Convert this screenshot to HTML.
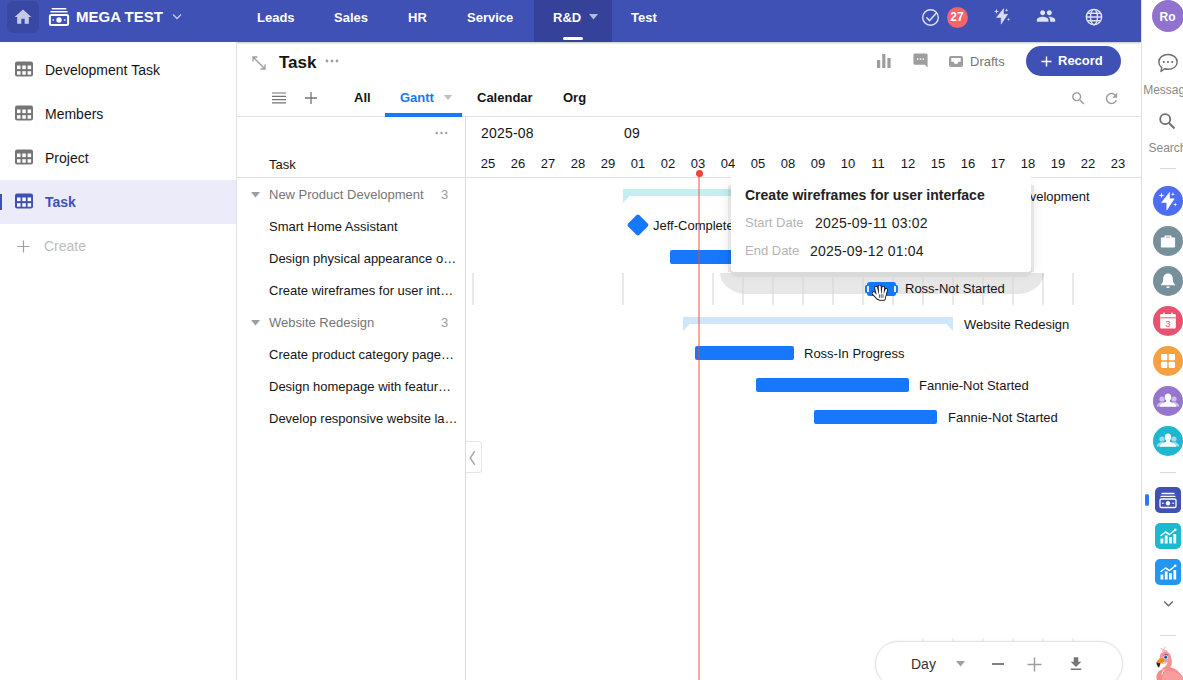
<!DOCTYPE html>
<html><head><meta charset="utf-8">
<style>
*{box-sizing:border-box;margin:0;padding:0}
html,body{width:1183px;height:680px;overflow:hidden;background:#fff;font-family:"Liberation Sans",sans-serif;color:#151515}
.abs{position:absolute}
#hdr{position:absolute;left:0;top:0;width:1141px;height:42px;background:#3f51b5;box-shadow:0 1px 2px rgba(0,0,0,.25)}
.nav{position:absolute;top:0;height:42px;line-height:35px;color:#fff;font-weight:bold;font-size:13px}
#side{position:absolute;left:0;top:42px;width:237px;height:638px;border-right:1px solid #e0e0e0;background:#fff}
.si{position:absolute;left:0;width:236px;height:44px;line-height:44px;font-size:14px;color:#151515;padding-left:45px}
.si svg{position:absolute;left:15px;top:13px}
#rail{position:absolute;left:1141px;top:0;width:42px;height:680px;background:#fff;border-left:1px solid #e0e0e0}
.t{position:absolute;white-space:nowrap}
.row{position:absolute;left:269px;font-size:13px;height:32px;line-height:32px;white-space:nowrap;color:#151515}
.day{position:absolute;top:156px;width:30px;text-align:center;font-size:13px;color:#151515;line-height:16px}
.bar{position:absolute;height:12px;background:#1677ff;border-radius:2px}
.bl{position:absolute;font-size:13px;line-height:16px;white-space:nowrap;color:#151515}
.circ{position:absolute;left:12px;width:30px;height:30px;border-radius:50%}
</style></head><body>
<div id="hdr">
<div class="abs" style="left:7px;top:1px;width:32px;height:32px;border-radius:6px;background:#3949a3"></div>
<svg class="abs" style="left:13px;top:7px" width="20" height="20" viewBox="0 0 24 24"><path fill="#c5cae9" d="M10 20v-6h4v6h5v-8h3L12 3 2 12h3v8z"/></svg>
<svg class="abs" style="left:48px;top:7px" width="22" height="20" viewBox="0 0 22 20"><g fill="none" stroke="#fff" stroke-linecap="round"><path d="M4.300 1.700h13.400M3 4.700h16" stroke-width="1.600"/><rect x="1.900" y="7.900" width="18.200" height="10.200" rx="1.300" stroke-width="2"/></g><circle cx="11" cy="13" r="2.700" fill="#fff"/><rect x="4.400" y="12.200" width="1.700" height="1.600" fill="#fff" opacity=".8"/><rect x="15.900" y="12.200" width="1.700" height="1.600" fill="#fff" opacity=".8"/></svg>
<div class="t" style="left:76px;top:8px;font-size:15px;line-height:18px;font-weight:bold;color:#fff">MEGA TEST</div>
<svg class="abs" style="left:172px;top:13px" width="10" height="8" viewBox="0 0 10 8"><path d="M1 1.500l4 4 4-4" fill="none" stroke="#c5cae9" stroke-width="1.300"/></svg>
<div class="abs" style="left:533.500px;top:0;width:78px;height:42px;background:#36429a"></div>
<div class="abs" style="left:563px;top:37px;width:20px;height:3px;border-radius:1.500px;background:#fff"></div>
<div class="nav" style="left:257px">Leads</div>
<div class="nav" style="left:334px">Sales</div>
<div class="nav" style="left:408px">HR</div>
<div class="nav" style="left:467px">Service</div>
<div class="nav" style="left:553px">R&amp;D</div>
<svg class="abs" style="left:589px;top:14px" width="9" height="6" viewBox="0 0 9 6"><path d="M0 0h9L4.500 5.500z" fill="#b3b9e0"/></svg>
<div class="nav" style="left:631px">Test</div>
<svg class="abs" style="left:921px;top:8px" width="19" height="19" viewBox="0 0 19 19"><circle cx="9.500" cy="9.500" r="7.800" fill="none" stroke="#dfe2f3" stroke-width="1.400"/><path d="M5.800 9.800l2.800 2.800 6.600-7.400" fill="none" stroke="#dfe2f3" stroke-width="1.500" stroke-linecap="round" stroke-linejoin="round"/></svg>
<div class="abs" style="left:946.500px;top:6.500px;width:21px;height:21px;border-radius:50%;background:#f3646c;color:#fff;font-size:12px;font-weight:bold;text-align:center;line-height:21px">27</div>
<svg class="abs" style="left:988.500px;top:3px" width="26.400" height="26.400" viewBox="0 0 30 30"><path fill="#dcdff2" stroke="#dcdff2" stroke-width=".6" stroke-linejoin="round" d="M16.6 6.400L8.600 16.400h5.200v7.600L21.200 12.800h-4.800z"/><path fill="#dcdff2" d="M8.50,6.60L9.16,8.84L11.40,9.50L9.16,10.16L8.50,12.40L7.84,10.16L5.60,9.50L7.84,8.84zM19.90,6.10L20.38,7.72L22.00,8.20L20.38,8.68L19.90,10.30L19.42,8.68L17.80,8.20L19.42,7.72zM22.20,16.50L22.68,18.12L24.30,18.60L22.68,19.08L22.20,20.70L21.72,19.08L20.10,18.60L21.72,18.12z"/></svg>
<svg class="abs" style="left:1036px;top:6px" width="20" height="20" viewBox="0 0 24 24"><path fill="#dfe2f3" d="M16 11c1.660 0 2.990-1.340 2.990-3S17.660 5 16 5c-1.660 0-3 1.340-3 3s1.340 3 3 3zm-8 0c1.660 0 2.990-1.340 2.990-3S9.660 5 8 5C6.340 5 5 6.340 5 8s1.340 3 3 3zm0 2c-2.330 0-7 1.170-7 3.500V19h14v-2.500c0-2.330-4.670-3.500-7-3.500zm8 0c-.29 0-.62.020-.97.050 1.160.84 1.970 1.970 1.970 3.450V19h6v-2.500c0-2.330-4.670-3.500-7-3.500z"/></svg>
<svg class="abs" style="left:1084px;top:7px" width="20" height="20" viewBox="0 0 24 24"><g fill="none" stroke="#dfe2f3" stroke-width="1.700"><circle cx="12" cy="12" r="9.200"/><ellipse cx="12" cy="12" rx="4.200" ry="9.200"/><path d="M3 12h18M4.500 7.500h15M4.500 16.500h15"/></g></svg>
</div>
<div id="side">
<div class="si" style="top:6px"><svg width="18" height="16" viewBox="0 0 18 16"><rect x="0" y="0.500" width="18" height="15" rx="2" fill="#757575"/><g fill="#fff"><rect x="2" y="4.500" width="3.500" height="3.600"/><rect x="7.300" y="4.500" width="3.500" height="3.600"/><rect x="12.600" y="4.500" width="3.500" height="3.600"/><rect x="2" y="10.200" width="3.500" height="3.500"/><rect x="7.300" y="10.200" width="3.500" height="3.500"/><rect x="12.600" y="10.200" width="3.500" height="3.500"/></g></svg>Development Task</div>
<div class="si" style="top:50px"><svg width="18" height="16" viewBox="0 0 18 16"><rect x="0" y="0.500" width="18" height="15" rx="2" fill="#757575"/><g fill="#fff"><rect x="2" y="4.500" width="3.500" height="3.600"/><rect x="7.300" y="4.500" width="3.500" height="3.600"/><rect x="12.600" y="4.500" width="3.500" height="3.600"/><rect x="2" y="10.200" width="3.500" height="3.500"/><rect x="7.300" y="10.200" width="3.500" height="3.500"/><rect x="12.600" y="10.200" width="3.500" height="3.500"/></g></svg>Members</div>
<div class="si" style="top:94px"><svg width="18" height="16" viewBox="0 0 18 16"><rect x="0" y="0.500" width="18" height="15" rx="2" fill="#757575"/><g fill="#fff"><rect x="2" y="4.500" width="3.500" height="3.600"/><rect x="7.300" y="4.500" width="3.500" height="3.600"/><rect x="12.600" y="4.500" width="3.500" height="3.600"/><rect x="2" y="10.200" width="3.500" height="3.500"/><rect x="7.300" y="10.200" width="3.500" height="3.500"/><rect x="12.600" y="10.200" width="3.500" height="3.500"/></g></svg>Project</div>
<div class="si" style="top:138px;background:#ebebfa;color:#3f51b5;font-weight:bold"><svg width="18" height="16" viewBox="0 0 18 16"><rect x="0" y="0.500" width="18" height="15" rx="2" fill="#3f51b5"/><g fill="#fff"><rect x="2" y="4.500" width="3.500" height="3.600"/><rect x="7.300" y="4.500" width="3.500" height="3.600"/><rect x="12.600" y="4.500" width="3.500" height="3.600"/><rect x="2" y="10.200" width="3.500" height="3.500"/><rect x="7.300" y="10.200" width="3.500" height="3.500"/><rect x="12.600" y="10.200" width="3.500" height="3.500"/></g></svg>Task</div>
<div class="abs" style="left:0;top:152px;width:2px;height:16px;background:#3f51b5"></div>
<div class="si" style="top:182px;color:#bdbdbd;padding-left:44px"><svg style="left:17px;top:16px" width="13" height="13" viewBox="0 0 13 13"><path d="M6.500 0.500v12M0.500 6.500h12" stroke="#9e9e9e" stroke-width="1.200"/></svg>Create</div>
</div>
<div id="main">
<svg class="abs" style="left:251px;top:55px" width="16" height="16" viewBox="0 0 16 16"><g fill="none" stroke="#9e9e9e" stroke-width="1.300"><path d="M2 2l12 12M2 6.500V2h4.500M14 9.500V14H9.500"/></g></svg>
<div class="t" style="left:279px;top:52px;font-size:17px;line-height:22px;font-weight:bold;color:#151515">Task</div>
<svg class="abs" style="left:325px;top:59px" width="14" height="4" viewBox="0 0 14 4"><g fill="#9e9e9e"><circle cx="2" cy="2" r="1.400"/><circle cx="7" cy="2" r="1.400"/><circle cx="12" cy="2" r="1.400"/></g></svg>
<svg class="abs" style="left:876px;top:53px" width="16" height="16" viewBox="0 0 16 16"><g fill="#9e9e9e"><rect x="1" y="7" width="3.200" height="8"/><rect x="6.200" y="1" width="3.200" height="14"/><rect x="11.400" y="5" width="3.200" height="10"/></g></svg>
<svg class="abs" style="left:912px;top:52px" width="17" height="17" viewBox="0 0 24 24"><path fill="#9e9e9e" d="M20 2H4c-1.100 0-1.990.9-1.990 2L2 22l4-4h14c1.100 0 2-.9 2-2V4c0-1.100-.9-2-2-2z" transform="translate(24,0) scale(-1,1)"/><g fill="#fff"><rect x="7" y="9" width="2" height="2"/><rect x="11" y="9" width="2" height="2"/><rect x="15" y="9" width="2" height="2"/></g></svg>
<svg class="abs" style="left:949px;top:55.500px" width="14" height="11" viewBox="0 0 14 11"><path fill="#9e9e9e" fill-rule="evenodd" d="M2 0h10a2 2 0 0 1 2 2v7a2 2 0 0 1-2 2H2a2 2 0 0 1-2-2V2a2 2 0 0 1 2-2zM2.300 2v3.800h2.500a2.200 2.200 0 0 0 4.400 0h2.500V2z"/></svg>
<div class="t" style="left:970px;top:54px;font-size:13px;line-height:16px;color:#757575">Drafts</div>
<div class="abs" style="left:1026px;top:46px;width:95px;height:30px;border-radius:15px;background:#3f51b5"></div>
<svg class="abs" style="left:1041px;top:56px" width="11" height="11" viewBox="0 0 11 11"><path d="M5.500 0.500v10M0.500 5.500h10" stroke="#fff" stroke-width="1.400"/></svg>
<div class="t" style="left:1058px;top:53px;font-size:13px;line-height:16px;font-weight:bold;color:#fff">Record</div>

<svg class="abs" style="left:272px;top:92px" width="14" height="12" viewBox="0 0 14 12"><path d="M0 1h14M0 4.300h14M0 7.600h14M0 10.900h14" stroke="#757575" stroke-width="1.200"/></svg>
<svg class="abs" style="left:304px;top:91px" width="14" height="14" viewBox="0 0 14 14"><path d="M7 1v12M1 7h12" stroke="#757575" stroke-width="1.300"/></svg>
<div class="t" style="left:354px;top:90px;font-size:13px;line-height:16px;font-weight:bold;color:#151515">All</div>
<div class="t" style="left:400px;top:90px;font-size:13px;line-height:16px;font-weight:bold;color:#1677ff">Gantt</div>
<svg class="abs" style="left:444px;top:95px" width="8" height="5" viewBox="0 0 8 5"><path d="M0 0h8L4 5z" fill="#bdbdbd"/></svg>
<div class="t" style="left:477px;top:90px;font-size:13px;line-height:16px;font-weight:bold;color:#151515">Calendar</div>
<div class="t" style="left:563px;top:90px;font-size:13px;line-height:16px;font-weight:bold;color:#151515">Org</div>
<svg class="abs" style="left:1070px;top:90px" width="17" height="17" viewBox="0 0 24 24"><path fill="#9e9e9e" d="M15.500 14h-.79l-.28-.27C15.410 12.590 16 11.110 16 9.500 16 5.910 13.090 3 9.500 3S3 5.910 3 9.500 5.910 16 9.500 16c1.610 0 3.090-.590 4.230-1.570l.27.280v.790l5 4.990L20.490 19l-4.990-5zm-6 0C7.010 14 5 11.990 5 9.500S7.010 5 9.500 5 14 7.010 14 9.500 11.990 14 9.500 14z"/></svg>
<svg class="abs" style="left:1103px;top:90px" width="17" height="17" viewBox="0 0 24 24"><path fill="#9e9e9e" d="M17.650 6.350C16.200 4.900 14.210 4 12 4c-4.420 0-7.990 3.580-7.990 8s3.570 8 7.990 8c3.730 0 6.840-2.550 7.730-6h-2.080c-.82 2.330-3.040 4-5.650 4-3.310 0-6-2.690-6-6s2.690-6 6-6c1.660 0 3.140.690 4.220 1.780L13 11h7V4l-2.350 2.350z"/></svg>
<div class="abs" style="left:237px;top:116px;width:904px;height:1px;background:#e0e0e0"></div>
<div class="abs" style="left:385px;top:113px;width:77px;height:3.500px;background:#1677ff"></div>
<div class="abs" style="left:465px;top:117px;width:1px;height:563px;background:#dcdcdc"></div>
<div class="abs" style="left:237px;top:177px;width:904px;height:1px;background:#e0e0e0"></div>
<svg class="abs" style="left:435px;top:131px" width="13" height="4" viewBox="0 0 13 4"><g fill="#9e9e9e"><circle cx="1.800" cy="2" r="1.200"/><circle cx="6.500" cy="2" r="1.200"/><circle cx="11.200" cy="2" r="1.200"/></g></svg>
<div class="t" style="left:269px;top:157px;font-size:13px;line-height:16px;color:#151515">Task</div>
<svg class="abs" style="left:251px;top:192px" width="9" height="6" viewBox="0 0 9 6"><path d="M0 0h9L4.500 5.500z" fill="#9e9e9e"/></svg>
<div class="row" style="top:179px;color:#757575">New Product Development</div>
<div class="row" style="left:441px;top:179px;color:#9e9e9e">3</div>
<div class="row" style="top:211px">Smart Home Assistant</div>
<div class="row" style="top:243px">Design physical appearance o…</div>
<div class="row" style="top:275px">Create wireframes for user int…</div>
<svg class="abs" style="left:251px;top:320px" width="9" height="6" viewBox="0 0 9 6"><path d="M0 0h9L4.500 5.500z" fill="#9e9e9e"/></svg>
<div class="row" style="top:307px;color:#757575">Website Redesign</div>
<div class="row" style="left:441px;top:307px;color:#9e9e9e">3</div>
<div class="row" style="top:339px">Create product category page…</div>
<div class="row" style="top:371px">Design homepage with featur…</div>
<div class="row" style="top:403px">Develop responsive website la…</div>
<div class="t" style="left:481px;top:125px;font-size:14px;letter-spacing:.2px;line-height:16px;color:#151515">2025-08</div>
<div class="t" style="left:624px;top:125px;font-size:14px;letter-spacing:.2px;line-height:16px;color:#151515">09</div>
<div class="day" style="left:473px">25</div>
<div class="day" style="left:503px">26</div>
<div class="day" style="left:533px">27</div>
<div class="day" style="left:563px">28</div>
<div class="day" style="left:593px">29</div>
<div class="day" style="left:623px">01</div>
<div class="day" style="left:653px">02</div>
<div class="day" style="left:683px">03</div>
<div class="day" style="left:713px">04</div>
<div class="day" style="left:743px">05</div>
<div class="day" style="left:773px">08</div>
<div class="day" style="left:803px">09</div>
<div class="day" style="left:833px">10</div>
<div class="day" style="left:863px">11</div>
<div class="day" style="left:893px">12</div>
<div class="day" style="left:923px">15</div>
<div class="day" style="left:953px">16</div>
<div class="day" style="left:983px">17</div>
<div class="day" style="left:1013px">18</div>
<div class="day" style="left:1043px">19</div>
<div class="day" style="left:1073px">22</div>
<div class="day" style="left:1103px">23</div>
<div class="abs" style="left:472px;top:273px;width:2px;height:32px;background:#e9e9e9"></div>
<div class="abs" style="left:622px;top:273px;width:2px;height:32px;background:#e9e9e9"></div>
<div class="abs" style="left:712px;top:273px;width:2px;height:32px;background:#e9e9e9"></div>
<div class="abs" style="left:742px;top:273px;width:2px;height:32px;background:#e9e9e9"></div>
<div class="abs" style="left:772px;top:273px;width:2px;height:32px;background:#e9e9e9"></div>
<div class="abs" style="left:802px;top:273px;width:2px;height:32px;background:#e9e9e9"></div>
<div class="abs" style="left:832px;top:273px;width:2px;height:32px;background:#e9e9e9"></div>
<div class="abs" style="left:862px;top:273px;width:2px;height:32px;background:#e9e9e9"></div>
<div class="abs" style="left:892px;top:273px;width:2px;height:32px;background:#e9e9e9"></div>
<div class="abs" style="left:922px;top:273px;width:2px;height:32px;background:#e9e9e9"></div>
<div class="abs" style="left:952px;top:273px;width:2px;height:32px;background:#e9e9e9"></div>
<div class="abs" style="left:982px;top:273px;width:2px;height:32px;background:#e9e9e9"></div>
<div class="abs" style="left:1012px;top:273px;width:2px;height:32px;background:#e9e9e9"></div>
<div class="abs" style="left:1042px;top:273px;width:2px;height:32px;background:#e9e9e9"></div>
<div class="abs" style="left:1072px;top:273px;width:2px;height:32px;background:#e9e9e9"></div>
<svg class="abs" style="left:623px;top:189px" width="302" height="15" viewBox="0 0 302 15"><path d="M0 0h302v14l-6.500-7H6.500L0 14z" fill="#c5eef0"/></svg>
<div class="bl" style="left:935px;top:189px">New Product Development</div>
<svg class="abs" style="left:683px;top:317px" width="270" height="15" viewBox="0 0 270 15"><path d="M0 0h270v14l-6.500-7H6.500L0 14z" fill="#cfe6fa"/></svg>
<div class="bl" style="left:964px;top:317px">Website Redesign</div>
<div class="abs" style="left:629.500px;top:216.700px;width:15.800px;height:15.800px;background:#1677ff;transform:rotate(45deg);border-radius:2.200px"></div>
<div class="bl" style="left:653px;top:218px">Jeff-Completed</div>
<div class="bar" style="left:670px;top:250px;width:120px;height:14px"></div>
<div class="bar" style="left:695px;top:346px;width:99px;height:14px"></div>
<div class="bl" style="left:804px;top:346px">Ross-In Progress</div>
<div class="bar" style="left:756px;top:378px;width:153px;height:14px"></div>
<div class="bl" style="left:919px;top:378px">Fannie-Not Started</div>
<div class="bar" style="left:814px;top:410px;width:123px;height:14px"></div>
<div class="bl" style="left:948px;top:410px">Fannie-Not Started</div>
<div class="abs" style="left:720px;top:273px;width:324px;height:21px;background:rgba(0,0,0,.095);border-radius:0 0 27px 27px / 0 0 21px 21px"></div>
<div class="abs" style="left:742px;top:273px;width:2px;height:21px;background:#dedede"></div>
<div class="abs" style="left:772px;top:273px;width:2px;height:21px;background:#dedede"></div>
<div class="abs" style="left:802px;top:273px;width:2px;height:21px;background:#dedede"></div>
<div class="abs" style="left:832px;top:273px;width:2px;height:21px;background:#dedede"></div>
<div class="abs" style="left:862px;top:273px;width:2px;height:21px;background:#dedede"></div>
<div class="abs" style="left:892px;top:273px;width:2px;height:21px;background:#dedede"></div>
<div class="abs" style="left:922px;top:273px;width:2px;height:21px;background:#dedede"></div>
<div class="abs" style="left:952px;top:273px;width:2px;height:21px;background:#dedede"></div>
<div class="abs" style="left:982px;top:273px;width:2px;height:21px;background:#dedede"></div>
<div class="abs" style="left:1012px;top:273px;width:2px;height:21px;background:#dedede"></div>
<div class="bar" style="left:867px;top:282px;width:28.500px;height:14px;border-radius:2.500px"></div>
<div class="bar" style="left:865px;top:285px;width:5px;height:8px;border-radius:1.500px"></div>
<div class="bar" style="left:892.500px;top:285px;width:5px;height:8px;border-radius:1.500px"></div>
<div class="abs" style="left:866.500px;top:286.200px;width:2px;height:5.500px;background:#fff;border-radius:.5px;opacity:.92"></div>
<div class="abs" style="left:894.200px;top:286.200px;width:2px;height:5.500px;background:#fff;border-radius:.5px;opacity:.92"></div>
<div class="bl" style="left:905px;top:281px">Ross-Not Started</div>
<div class="abs" style="left:698px;top:174px;width:2px;height:506px;background:rgba(240,70,58,.47)"></div>
<div class="abs" style="left:695.500px;top:170px;width:7px;height:7px;border-radius:50%;background:#f44336"></div>
<div class="abs" style="left:728px;top:185px;width:306px;height:87px;background:rgba(0,0,0,.1);border-radius:2px 2px 0 0;box-shadow:0 0 12px rgba(0,0,0,.09)"></div>
<div class="abs" style="left:730px;top:268px;width:302px;height:9px;background:#dadada;border-radius:0 0 8px 8px"></div>
<div class="abs" style="left:731px;top:176px;width:300px;height:96px;background:#fff;border-radius:0 0 3px 3px"></div>
<div class="t" style="left:745px;top:187px;font-size:14px;line-height:16px;font-weight:bold;color:#222">Create wireframes for user interface</div>
<div class="t" style="left:745px;top:215px;font-size:13px;line-height:16px;color:#b4b4b4">Start Date</div>
<div class="t" style="left:815px;top:215px;font-size:14px;letter-spacing:.2px;line-height:16px;color:#222">2025-09-11 03:02</div>
<div class="t" style="left:745px;top:243px;font-size:13px;line-height:16px;color:#b4b4b4">End Date</div>
<div class="t" style="left:810px;top:243px;font-size:14px;letter-spacing:.2px;line-height:16px;color:#222">2025-09-12 01:04</div>
<svg class="abs" style="left:872px;top:285.300px" width="16" height="16.500" viewBox="0 0 16 16.500"><path d="M1.7 8.3L6.2 13" stroke="#111" stroke-width="4.0" stroke-linecap="round" fill="none"/><path d="M4.1 2.8L6 11" stroke="#111" stroke-width="3.8" stroke-linecap="round" fill="none"/><path d="M7.7 1.6L8.2 11" stroke="#111" stroke-width="3.8" stroke-linecap="round" fill="none"/><path d="M11.2 2.8L10.4 11" stroke="#111" stroke-width="3.8" stroke-linecap="round" fill="none"/><path d="M14.2 5L12.2 11" stroke="#111" stroke-width="3.7" stroke-linecap="round" fill="none"/><path d="M5 9h8.300l-1 5.300H7.300z" fill="#111" stroke="#111" stroke-width="2.7" stroke-linejoin="round"/><path d="M1.7 8.3L6.2 13" stroke="#fff" stroke-width="2.3" stroke-linecap="round" fill="none"/><path d="M4.1 2.8L6 11" stroke="#fff" stroke-width="2.1" stroke-linecap="round" fill="none"/><path d="M7.7 1.6L8.2 11" stroke="#fff" stroke-width="2.1" stroke-linecap="round" fill="none"/><path d="M11.2 2.8L10.4 11" stroke="#fff" stroke-width="2.1" stroke-linecap="round" fill="none"/><path d="M14.2 5L12.2 11" stroke="#fff" stroke-width="2.0" stroke-linecap="round" fill="none"/><path d="M5 9h8.300l-1 5.300H7.300z" fill="#fff" stroke="#fff" stroke-width="1" stroke-linejoin="round"/><path d="M7.400 9.300v3.600M9.200 9.300v3.600M11 9.300v3.600" stroke="#111" stroke-width=".7"/></svg>
<div class="abs" style="left:466px;top:441px;width:16px;height:32px;border:1px solid #e6e6e6;border-left:none;border-radius:0 3px 3px 0;background:#fff"></div>
<svg class="abs" style="left:469px;top:450px" width="7" height="16" viewBox="0 0 7 16"><path d="M5.800 1.200L1.200 8l4.600 6.800" fill="none" stroke="#a6a6a6" stroke-width="1.500"/></svg>
<div class="abs" style="left:922px;top:638px;width:2px;height:4px;background:#f2f2f2"></div><div class="abs" style="left:952px;top:638px;width:2px;height:4px;background:#f2f2f2"></div><div class="abs" style="left:982px;top:638px;width:2px;height:4px;background:#f2f2f2"></div><div class="abs" style="left:1012px;top:638px;width:2px;height:4px;background:#f2f2f2"></div><div class="abs" style="left:1042px;top:638px;width:2px;height:4px;background:#f2f2f2"></div><div class="abs" style="left:1072px;top:638px;width:2px;height:4px;background:#f2f2f2"></div><div class="abs" style="left:874.500px;top:641px;width:248px;height:46px;border-radius:23px;background:#fff;border:1.500px solid #e2e2e2;box-shadow:0 0 3px rgba(0,0,0,.08)"></div>
<div class="t" style="left:911px;top:656px;font-size:14px;line-height:16px;color:#333">Day</div>
<svg class="abs" style="left:955.500px;top:661px" width="9" height="6" viewBox="0 0 9 6"><path d="M0 0h9L4.500 5.500z" fill="#9e9e9e"/></svg>
<div class="abs" style="left:992px;top:663px;width:12px;height:1.500px;background:#808080"></div>
<svg class="abs" style="left:1027px;top:656.500px" width="15" height="15" viewBox="0 0 15 15"><path d="M7.500 0.500v14M0.500 7.500h14" stroke="#9e9e9e" stroke-width="1.500"/></svg>
<svg class="abs" style="left:1067px;top:655px" width="18" height="18" viewBox="0 0 24 24"><path fill="#757575" d="M19 9h-4V3H9v6H5l7 7 7-7zM5 18v2h14v-2H5z"/></svg>
</div>
<div id="rail"><div class="abs" style="left:-.5px;top:0;width:42px;height:680px">
<div class="abs" style="left:10px;top:0;width:32px;height:32px;border-radius:50%;background:#9272cf;color:#fff;font-size:12px;font-weight:bold;text-align:center;line-height:34px">Ro</div>
<svg class="abs" style="left:15px;top:53px" width="22" height="21" viewBox="0 0 22 21"><path d="M11 1.500c5.200 0 9.200 3.200 9.200 7.400s-4 7.400-9.200 7.400c-1.200 0-2.300-.2-3.400-.5L4 18.500l.7-3.900C3 13.200 1.800 11.200 1.800 8.900c0-4.200 4-7.400 9.200-7.400z" fill="none" stroke="#6e6e6e" stroke-width="1.400" stroke-linejoin="round"/><g fill="#6e6e6e"><circle cx="6.800" cy="9" r="1.100"/><circle cx="11" cy="9" r="1.100"/><circle cx="15.200" cy="9" r="1.100"/></g></svg>
<div class="t" style="left:-24px;width:100px;text-align:center;top:83px;font-size:12px;line-height:14px;color:#8a8a8a">Message</div>
<svg class="abs" style="left:16px;top:112px" width="18" height="18" viewBox="0 0 18 18"><circle cx="7.200" cy="7.200" r="5" fill="none" stroke="#6e6e6e" stroke-width="1.800"/><path d="M11 11l5.500 5.500" stroke="#6e6e6e" stroke-width="2"/></svg>
<div class="t" style="left:-24px;width:100px;text-align:center;top:141px;font-size:12px;line-height:14px;color:#8a8a8a">Search</div>
<div class="abs" style="left:18px;top:168px;width:16px;height:1px;background:#d8d8d8"></div>
<div class="abs" style="left:11px;top:186px;width:30px;height:30px;border-radius:50%;background:#4d6ef2"></div><svg class="abs" style="left:11px;top:186px" width="30" height="30" viewBox="0 0 30 30"><path fill="#fff" stroke="#fff" stroke-width=".6" stroke-linejoin="round" d="M16.6 6.400L8.600 16.400h5.200v7.600L21.200 12.800h-4.800z"/><path fill="#fff" d="M8.50,6.60L9.16,8.84L11.40,9.50L9.16,10.16L8.50,12.40L7.84,10.16L5.60,9.50L7.84,8.84zM19.90,6.10L20.38,7.72L22.00,8.20L20.38,8.68L19.90,10.30L19.42,8.68L17.80,8.20L19.42,7.72zM22.20,16.50L22.68,18.12L24.30,18.60L22.68,19.08L22.20,20.70L21.72,19.08L20.10,18.60L21.72,18.12z"/></svg>
<div class="abs" style="left:11px;top:226px;width:30px;height:30px;border-radius:50%;background:#78909c"></div><svg class="abs" style="left:11px;top:226px" width="30" height="30" viewBox="0 0 30 30"><path fill="#fff" d="M12.300 9.500h5.400a.8.800 0 0 1 .8.800v1.200h2.800a.8.800 0 0 1 .8.800v8.400a.8.800 0 0 1-.8.800H8.700a.8.800 0 0 1-.8-.8v-8.400a.8.800 0 0 1 .8-.8h2.800v-1.200a.8.800 0 0 1 .8-.8zm.7 1.300v.7h4v-.7z"/></svg>
<div class="abs" style="left:11px;top:266px;width:30px;height:30px;border-radius:50%;background:#78909c"></div><svg class="abs" style="left:11px;top:266px" width="30" height="30" viewBox="0 0 30 30"><path fill="#fff" d="M15 7.500c3 0 4.800 2.300 4.800 5.200 0 3 .7 4.500 2.200 5.800v.8H8v-.8c1.500-1.300 2.200-2.800 2.200-5.800 0-2.900 1.800-5.200 4.800-5.200zM13.300 20.500h3.400c0 1-.8 1.600-1.700 1.600s-1.700-.6-1.700-1.600z"/></svg>
<div class="abs" style="left:11px;top:306px;width:30px;height:30px;border-radius:50%;background:#e9526f"></div><svg class="abs" style="left:11px;top:306px" width="30" height="30" viewBox="0 0 30 30"><path fill="#fff" d="M8.500 8h13a1.300 1.300 0 0 1 1.300 1.300v12a1.300 1.300 0 0 1-1.300 1.300h-13a1.300 1.300 0 0 1-1.300-1.300v-12A1.300 1.300 0 0 1 8.500 8z"/><rect x="7.200" y="11.300" width="15.600" height="1" fill="#e9526f"/><rect x="10.300" y="6.600" width="1.400" height="2.600" rx=".5" fill="#fff"/><rect x="18.300" y="6.600" width="1.400" height="2.600" rx=".5" fill="#fff"/><text x="15" y="20.800" font-family="Liberation Sans, sans-serif" font-size="9.500" text-anchor="middle" fill="#e9526f">3</text></svg>
<div class="abs" style="left:11px;top:346px;width:30px;height:30px;border-radius:50%;background:#f5a142"></div><svg class="abs" style="left:11px;top:346px" width="30" height="30" viewBox="0 0 30 30"><g fill="#fff"><rect x="8" y="8" width="6.300" height="6.300" rx="1"/><rect x="15.700" y="8" width="6.300" height="6.300" rx="1"/><rect x="8" y="15.700" width="6.300" height="6.300" rx="1"/><rect x="15.700" y="15.700" width="6.300" height="6.300" rx="1"/></g></svg>
<div class="abs" style="left:11px;top:386px;width:30px;height:30px;border-radius:50%;background:#9575cd"></div><svg class="abs" style="left:11px;top:386px" width="30" height="30" viewBox="0 0 30 30"><g fill="#fff"><g opacity=".55"><circle cx="9" cy="13" r="2.600"/><path d="M3.500 20.500c1-3 3-4.500 5.500-4.500s3 1 3.500 2l-2 2.500z"/><circle cx="21" cy="13" r="2.600"/><path d="M26.500 20.500c-1-3-3-4.500-5.500-4.500s-3 1-3.500 2l2 2.500z"/></g><path d="M15 7.500c2 0 3.300 1.500 3.300 3.600 0 1.500-.6 2.800-1.500 3.500v1.200l5 2.200c.8.400 1.200 1 1.200 1.800v1H7v-1c0-.8.400-1.400 1.200-1.800l5-2.200v-1.200c-.9-.7-1.500-2-1.500-3.500 0-2.100 1.300-3.600 3.300-3.600z"/></g></svg>
<div class="abs" style="left:11px;top:426px;width:30px;height:30px;border-radius:50%;background:#1fb6cf"></div><svg class="abs" style="left:11px;top:426px" width="30" height="30" viewBox="0 0 30 30"><g fill="#fff"><g opacity=".55"><circle cx="9" cy="13" r="2.600"/><path d="M3.500 20.500c1-3 3-4.500 5.500-4.500s3 1 3.500 2l-2 2.500z"/><circle cx="21" cy="13" r="2.600"/><path d="M26.500 20.500c-1-3-3-4.500-5.500-4.500s-3 1-3.500 2l2 2.500z"/></g><path d="M15 7.500c2 0 3.300 1.500 3.300 3.600 0 1.500-.6 2.800-1.500 3.500v1.200l5 2.200c.8.400 1.200 1 1.200 1.800v1H7v-1c0-.8.400-1.400 1.200-1.800l5-2.200v-1.200c-.9-.7-1.500-2-1.500-3.500 0-2.100 1.300-3.600 3.300-3.600z"/></g></svg>
<div class="abs" style="left:18px;top:472px;width:16px;height:1px;background:#d8d8d8"></div>
<div class="abs" style="left:3px;top:494px;width:4px;height:12px;border-radius:2px;background:#2979ff"></div>
<div class="abs" style="left:13px;top:487px;width:26px;height:26px;border-radius:5px;background:#3f51b5"></div><svg class="abs" style="left:13px;top:487px" width="26" height="26" viewBox="0 0 26 26"><g fill="none" stroke="#fff" stroke-width="1.300" stroke-linecap="round"><path d="M7 6.500h12M6 9.300h14"/><rect x="5" y="12" width="16" height="8.500" rx="1.300"/></g><circle cx="13" cy="16.200" r="2.200" fill="#fff"/><rect x="7" y="15.600" width="1.600" height="1.300" fill="#fff"/><rect x="17.400" y="15.600" width="1.600" height="1.300" fill="#fff"/></svg>
<div class="abs" style="left:13px;top:523px;width:26px;height:26px;border-radius:5px;background:#1cbacf"></div><svg class="abs" style="left:13px;top:523px" width="26" height="26" viewBox="0 0 26 26"><g fill="#fff"><rect x="5.500" y="15.500" width="2.800" height="5"/><rect x="9.800" y="12.500" width="2.800" height="8"/><rect x="14.100" y="14" width="2.800" height="6.500"/><rect x="18.400" y="11" width="2.800" height="9.500"/></g><path d="M6 12.500l4.500-3.500 4 2.500 5.500-4.500" fill="none" stroke="#fff" stroke-width="1.500" stroke-linecap="round" stroke-linejoin="round"/><circle cx="20.200" cy="6.800" r="1.300" fill="#fff"/></svg>
<div class="abs" style="left:13px;top:559px;width:26px;height:26px;border-radius:5px;background:#2196f3"></div><svg class="abs" style="left:13px;top:559px" width="26" height="26" viewBox="0 0 26 26"><g fill="#fff"><rect x="5.500" y="15.500" width="2.800" height="5"/><rect x="9.800" y="12.500" width="2.800" height="8"/><rect x="14.100" y="14" width="2.800" height="6.500"/><rect x="18.400" y="11" width="2.800" height="9.500"/></g><path d="M6 12.500l4.500-3.500 4 2.500 5.500-4.500" fill="none" stroke="#fff" stroke-width="1.500" stroke-linecap="round" stroke-linejoin="round"/><circle cx="20.200" cy="6.800" r="1.300" fill="#fff"/></svg>
<svg class="abs" style="left:21px;top:600px" width="11" height="8" viewBox="0 0 11 8"><path d="M1.200 1.500l4.300 4.300 4.300-4.300" fill="none" stroke="#6e6e6e" stroke-width="1.500"/></svg>
<div class="abs" style="left:18px;top:635px;width:16px;height:1px;background:#d8d8d8"></div>
<svg class="abs" style="left:1.500px;top:640px" width="40" height="40" viewBox="0 0 40 40"><path d="M18 8.500l4.500 3M22 7l-2.500 4.500M20.500 9.500l3.500 2" stroke="#f9bcc4" stroke-width="1.100" fill="none" stroke-linecap="round"/><circle cx="22.300" cy="11.800" r="2" fill="#f9b3ba"/><path d="M14 40C12.400 35 14.500 31.200 19 29.600c2.500-.9 4.500-1.600 6-3l3 .8c4.500 1 9 4.600 12 9.600V40z" fill="#f58b8d"/><path d="M25.800 18c2 4.500 1.200 8.500-4.300 11.500" fill="none" stroke="#f6908f" stroke-width="4.400" stroke-linecap="round"/><path d="M23 31.500c4-2 10.500-.5 17 5.500V40H19.500c-1-3.500.2-6.800 3.500-8.500z" fill="#f89c9c"/><path d="M21.300 30.200c-1.500 1-2.300 2.300-2.300 3.800" stroke="#fff" stroke-width="1" fill="none" stroke-linecap="round"/><circle cx="22.300" cy="17" r="5.600" fill="#f6979a"/><path d="M17 22c2 1.500 5 1.500 7-.5" fill="none" stroke="#f9b0b0" stroke-width="1.200"/><path d="M13.700 21.600L17.300 17.700l4.400 1.300-.8 3-3.400 1.600z" fill="#f6871c"/><path d="M14.500 20.600l3-2.600 2.500.7-3.500.9z" fill="#f9a03f"/><path d="M13.600 22l3.900 1.500-1.500 4.200c-1.800-1.300-2.700-3.300-2.400-5.700z" fill="#3b1d18"/><circle cx="22.700" cy="17" r="2.300" fill="#eef4fa"/><circle cx="22.700" cy="17.200" r="1.600" fill="#2f72b8"/><circle cx="22.700" cy="17.300" r=".7" fill="#152a52"/><path d="M20.600 15.600c1.200-1.300 3.200-1.400 4.500-.2" fill="none" stroke="#3a2a3a" stroke-width=".7"/></svg>
</div></div>
</body></html>
